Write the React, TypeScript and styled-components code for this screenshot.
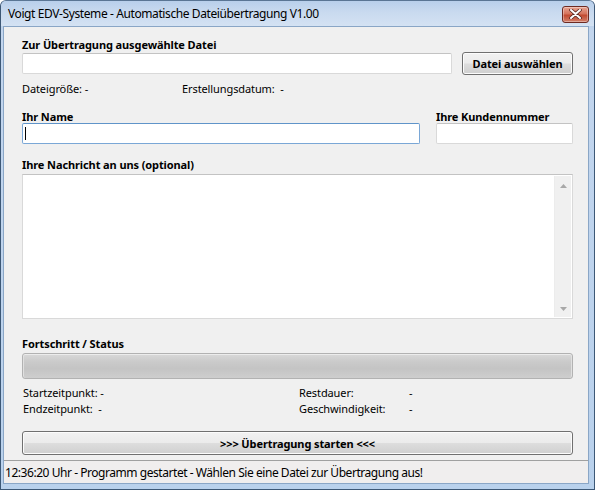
import React from "react";
import styled, { createGlobalStyle } from "styled-components";

const GlobalStyle = createGlobalStyle`
  html, body {
    margin: 0;
    padding: 0;
    background: #ffffff;
  }
  * {
    box-sizing: border-box;
  }
`;

const uiFont = `"Noto Sans", "Open Sans", "Liberation Sans", sans-serif`;

const Frame = styled.div`
  width: 595px;
  height: 490px;
  display: flex;
  flex-direction: column;
  background: linear-gradient(180deg, #a9c3e2 0px, #c3d6ee 30px, #b9d1ec 100%);
  border: 1px solid #3d5876;
  border-top-color: #5a7594;
  border-radius: 6px 6px 0 0;
  font-family: ${uiFont};
  color: #000;
  overflow: hidden;
`;

const TitleBar = styled.div`
  height: 25px;
  flex: none;
  display: flex;
  align-items: center;
  justify-content: space-between;
  padding: 0 5px 0 7px;
  background: linear-gradient(180deg, #b8cfeb 0%, #c9daef 45%, #d4e2f3 100%);
`;

const Title = styled.span`
  font-size: 12px;
  letter-spacing: -0.4px;
  color: #000;
`;

const CloseButton = styled.div`
  width: 27px;
  height: 17px;
  margin-top: 1px;
  border: 1px solid #6d2a22;
  border-radius: 3px;
  background: linear-gradient(180deg, #e8a493 0%, #d5735c 45%, #c24a31 55%, #d2806a 100%);
  display: flex;
  align-items: center;
  justify-content: center;
  box-shadow: inset 0 0 0 1px rgba(255, 255, 255, 0.35);
`;

const ClientWrap = styled.div`
  flex: 1;
  display: flex;
  padding: 0 5px 5px 2px;
  min-height: 0;
`;

const Client = styled.div`
  flex: 1;
  display: flex;
  flex-direction: column;
  background: #f0f0f0;
  border: 1px solid #8aa6c6;
  min-height: 0;
`;

const Content = styled.div`
  flex: 1;
  display: flex;
  flex-direction: column;
  padding: 10px 15px 0 18px;
`;

const Label = styled.div`
  font-size: 11px;
  font-weight: 700;
  letter-spacing: -0.1px;
  line-height: 16px;
  height: 16px;
`;

const Info = styled.div`
  font-size: 11px;
  letter-spacing: -0.1px;
  line-height: 16px;
  color: #000;
`;

const Row = styled.div<{ $gap?: number; $align?: string }>`
  display: flex;
  align-items: ${(p) => p.$align ?? "center"};
  gap: ${(p) => p.$gap ?? 0}px;
`;

const TextBox = styled.div<{ $grow?: boolean; $focused?: boolean }>`
  height: 21px;
  flex: ${(p) => (p.$grow ? "1 1 auto" : "none")};
  background: #fff;
  border: 1px solid ${(p) => (p.$focused ? "#7aa7d6" : "#d9d9d9")};
  border-top-color: ${(p) => (p.$focused ? "#5f94c9" : "#c3c3c3")};
  border-radius: 2px;
  position: relative;
`;

const Caret = styled.div`
  position: absolute;
  left: 2px;
  top: 3px;
  width: 1px;
  height: 13px;
  background: #000;
`;

const Button = styled.div<{ $width?: number; $height?: number }>`
  width: ${(p) => (p.$width ? `${p.$width}px` : "100%")};
  height: ${(p) => p.$height ?? 23}px;
  flex: none;
  border: 1px solid #707070;
  border-radius: 3px;
  background: linear-gradient(180deg, #f2f2f2 0%, #ebebeb 48%, #dddddd 52%, #cfcfcf 100%);
  box-shadow: inset 0 0 0 1px #fcfcfc;
  display: flex;
  align-items: center;
  justify-content: center;
  font-size: 11px;
  font-weight: 700;
  letter-spacing: -0.1px;
`;

const FieldColumn = styled.div<{ $width?: number }>`
  display: flex;
  flex-direction: column;
  width: ${(p) => (p.$width ? `${p.$width}px` : "auto")};
  flex: ${(p) => (p.$width ? "none" : 1)};
`;

const FieldLabel = styled(Label)`
  margin-bottom: -2px;
`;

const MessageBox = styled.div`
  height: 145px;
  background: #fff;
  border: 1px solid #d9d9d9;
  border-top-color: #c3c3c3;
  display: flex;
  justify-content: flex-end;
  padding: 1px;
`;

const ScrollBar = styled.div`
  width: 17px;
  height: 100%;
  background: #f0f0f0;
  border-left: 1px solid #ececec;
  display: flex;
  flex-direction: column;
  justify-content: space-between;
  align-items: center;
  padding: 8px 0 6px;
`;

const ProgressTrack = styled.div`
  height: 26px;
  border: 1px solid #b2b2b2;
  border-radius: 3px;
  background: linear-gradient(180deg, #d9d9d9 0%, #cbcbcb 30%, #c4c4c4 60%, #cecece 100%);
  box-shadow: inset 0 1px 0 #ececec, inset 1px 0 0 #e0e0e0, inset -1px 0 0 #e0e0e0;
`;

const StatGrid = styled.div`
  display: grid;
  grid-template-columns: 276px 110px 1fr;
  padding-left: 1px;
  margin-top: 6px;
`;

const StatusBar = styled.div`
  height: 23px;
  flex: none;
  display: flex;
  align-items: center;
  padding-left: 1px;
  border-top: 1px solid #a0a0a0;
  background: #f0eeee;
  font-size: 12px;
  letter-spacing: -0.45px;
`;

const Arrow = ({ up }: { up?: boolean }) => (
  <svg width="7" height="4" viewBox="0 0 7 4">
    <path d={up ? "M0 4 L3.5 0 L7 4 Z" : "M0 0 L3.5 4 L7 0 Z"} fill="#a8a8a8" />
  </svg>
);

const CloseGlyph = () => (
  <svg width="13" height="10" viewBox="0 0 13 10">
    <path
      d="M2 1 L11 9 M11 1 L2 9"
      stroke="#5a2a22"
      strokeWidth="3.6"
      strokeLinecap="round"
    />
    <path
      d="M2 1 L11 9 M11 1 L2 9"
      stroke="#ffffff"
      strokeWidth="2"
      strokeLinecap="round"
    />
  </svg>
);

export default function App() {
  return (
    <>
      <GlobalStyle />
      <Frame>
        <TitleBar>
          <Title>Voigt EDV-Systeme - Automatische Dateiübertragung V1.00</Title>
          <CloseButton>
            <CloseGlyph />
          </CloseButton>
        </TitleBar>
        <ClientWrap>
          <Client>
            <Content>
              <Label>Zur Übertragung ausgewählte Datei</Label>
              <Row $gap={10} style={{ marginTop: -1 }}>
                <TextBox $grow />
                <Button $width={111}>Datei auswählen</Button>
              </Row>
              <Row style={{ marginTop: 6 }}>
                <Info style={{ width: 160 }}>Dateigröße: -</Info>
                <Info>Erstellungsdatum:&nbsp; -</Info>
              </Row>
              <Row $gap={16} $align="flex-start" style={{ marginTop: 12 }}>
                <FieldColumn>
                  <FieldLabel>Ihr Name</FieldLabel>
                  <TextBox $focused>
                    <Caret />
                  </TextBox>
                </FieldColumn>
                <FieldColumn $width={137}>
                  <FieldLabel>Ihre Kundennummer</FieldLabel>
                  <TextBox />
                </FieldColumn>
              </Row>
              <Label style={{ marginTop: 13 }}>Ihre Nachricht an uns (optional)</Label>
              <MessageBox style={{ marginTop: 1 }}>
                <ScrollBar>
                  <Arrow up />
                  <Arrow />
                </ScrollBar>
              </MessageBox>
              <Label style={{ marginTop: 17 }}>Fortschritt / Status</Label>
              <ProgressTrack style={{ marginTop: 1 }} />
              <StatGrid>
                <Info>Startzeitpunkt: -</Info>
                <Info>Restdauer:</Info>
                <Info>-</Info>
                <Info>Endzeitpunkt:&nbsp; -</Info>
                <Info>Geschwindigkeit:</Info>
                <Info>-</Info>
              </StatGrid>
              <Button $height={24} style={{ marginTop: 14 }}>
                &gt;&gt;&gt; Übertragung starten &lt;&lt;&lt;
              </Button>
            </Content>
            <StatusBar>
              12:36:20 Uhr - Programm gestartet - Wählen Sie eine Datei zur Übertragung aus!
            </StatusBar>
          </Client>
        </ClientWrap>
      </Frame>
    </>
  );
}
